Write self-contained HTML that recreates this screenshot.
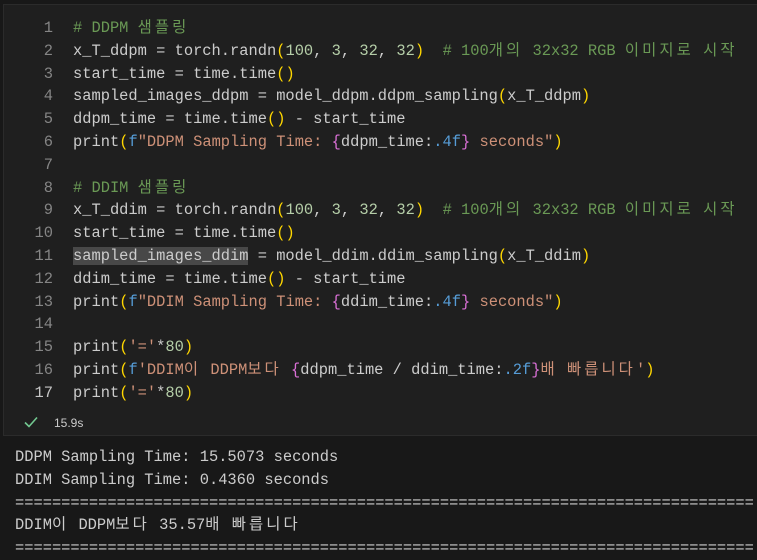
<!DOCTYPE html>
<html><head><meta charset="utf-8"><style>
html,body{margin:0;padding:0;width:757px;height:559px;background:#181818;overflow:hidden}
body{font-family:"Liberation Mono","Noto Sans CJK KR",monospace;font-size:15.4px;color:#cccccc}
.cell{position:absolute;left:3px;top:4px;width:760px;height:432px;background:#1f1f1f;border:1px solid #2b2b2b;box-sizing:border-box}
.ln{position:absolute;left:0;width:53px;text-align:right;color:#858585}
.code{position:absolute;left:73px;white-space:pre}
.row{position:absolute;height:22.8px;line-height:22.8px}
.k{font-family:"Noto Sans CJK KR",sans-serif;letter-spacing:3.08px;font-size:15.4px;line-height:0;vertical-align:baseline}
.c{color:#6a9955}.n{color:#b5cea8}.y{color:#ffd700}.s{color:#ce9178}.b{color:#569cd6}.m{color:#da70d6}
.hl{background:#484848}
.out{position:absolute;left:15px;white-space:pre;color:#cccccc}
</style></head><body>
<div class="cell"></div>
<div style="position:absolute;left:0;top:17px;width:757px">
<div class="row" style="top:0"><span class="ln">1</span><span class="code"><span class="c"># DDPM <span class="k">샘플링</span></span></span></div>
<div class="row" style="top:22.8px"><span class="ln">2</span><span class="code">x_T_ddpm = torch.randn<span class="y">(</span><span class="n">100</span>, <span class="n">3</span>, <span class="n">32</span>, <span class="n">32</span><span class="y">)</span>  <span class="c"># 100<span class="k">개의</span> 32x32 RGB <span class="k">이미지로</span> <span class="k">시작</span></span></span></div>
<div class="row" style="top:45.6px"><span class="ln">3</span><span class="code">start_time = time.time<span class="y">()</span></span></div>
<div class="row" style="top:68.4px"><span class="ln">4</span><span class="code">sampled_images_ddpm = model_ddpm.ddpm_sampling<span class="y">(</span>x_T_ddpm<span class="y">)</span></span></div>
<div class="row" style="top:91.2px"><span class="ln">5</span><span class="code">ddpm_time = time.time<span class="y">()</span> - start_time</span></div>
<div class="row" style="top:114px"><span class="ln">6</span><span class="code">print<span class="y">(</span><span class="b">f</span><span class="s">"DDPM Sampling Time: </span><span class="m">{</span>ddpm_time:<span class="b">.4f</span><span class="m">}</span><span class="s"> seconds"</span><span class="y">)</span></span></div>
<div class="row" style="top:136.8px"><span class="ln">7</span></div>
<div class="row" style="top:159.6px"><span class="ln">8</span><span class="code"><span class="c"># DDIM <span class="k">샘플링</span></span></span></div>
<div class="row" style="top:182.4px"><span class="ln">9</span><span class="code">x_T_ddim = torch.randn<span class="y">(</span><span class="n">100</span>, <span class="n">3</span>, <span class="n">32</span>, <span class="n">32</span><span class="y">)</span>  <span class="c"># 100<span class="k">개의</span> 32x32 RGB <span class="k">이미지로</span> <span class="k">시작</span></span></span></div>
<div class="row" style="top:205.2px"><span class="ln">10</span><span class="code">start_time = time.time<span class="y">()</span></span></div>
<div class="row" style="top:228px"><span class="ln">11</span><span class="code"><span class="hl">sampled_images_ddim</span> = model_ddim.ddim_sampling<span class="y">(</span>x_T_ddim<span class="y">)</span></span></div>
<div class="row" style="top:250.8px"><span class="ln">12</span><span class="code">ddim_time = time.time<span class="y">()</span> - start_time</span></div>
<div class="row" style="top:273.6px"><span class="ln">13</span><span class="code">print<span class="y">(</span><span class="b">f</span><span class="s">"DDIM Sampling Time: </span><span class="m">{</span>ddim_time:<span class="b">.4f</span><span class="m">}</span><span class="s"> seconds"</span><span class="y">)</span></span></div>
<div class="row" style="top:296.4px"><span class="ln">14</span></div>
<div class="row" style="top:319.2px"><span class="ln">15</span><span class="code">print<span class="y">(</span><span class="s">'='</span>*<span class="n">80</span><span class="y">)</span></span></div>
<div class="row" style="top:342px"><span class="ln">16</span><span class="code">print<span class="y">(</span><span class="b">f</span><span class="s">'DDIM<span class="k">이</span> DDPM<span class="k">보다</span> </span><span class="m">{</span>ddpm_time / ddim_time:<span class="b">.2f</span><span class="m">}</span><span class="s"><span class="k">배</span> <span class="k">빠릅니다</span>'</span><span class="y">)</span></span></div>
<div class="row" style="top:364.8px"><span class="ln" style="color:#c6c6c6">17</span><span class="code">print<span class="y">(</span><span class="s">'='</span>*<span class="n">80</span><span class="y">)</span></span></div>
</div>
<svg style="position:absolute;left:24px;top:416px" width="14" height="12" viewBox="0 0 14 12"><path d="M1 6.5 L5 10.5 L13 1.5" stroke="#73c991" stroke-width="1.6" fill="none"/></svg>
<div style="position:absolute;left:54px;top:414px;font-family:'Liberation Sans',sans-serif;font-size:12px;color:#cccccc;line-height:18px">15.9s</div>
<div style="position:absolute;top:446px;left:0;width:757px">
<div class="row out" style="top:0">DDPM Sampling Time: 15.5073 seconds</div>
<div class="row out" style="top:22.8px">DDIM Sampling Time: 0.4360 seconds</div>
<div class="row out" style="top:45.6px">================================================================================</div>
<div class="row out" style="top:68.4px">DDIM<span class="k">이</span> DDPM<span class="k">보다</span> 35.57<span class="k">배</span> <span class="k">빠릅니다</span></div>
<div class="row out" style="top:91.2px">================================================================================</div>
</div>
</body></html>
